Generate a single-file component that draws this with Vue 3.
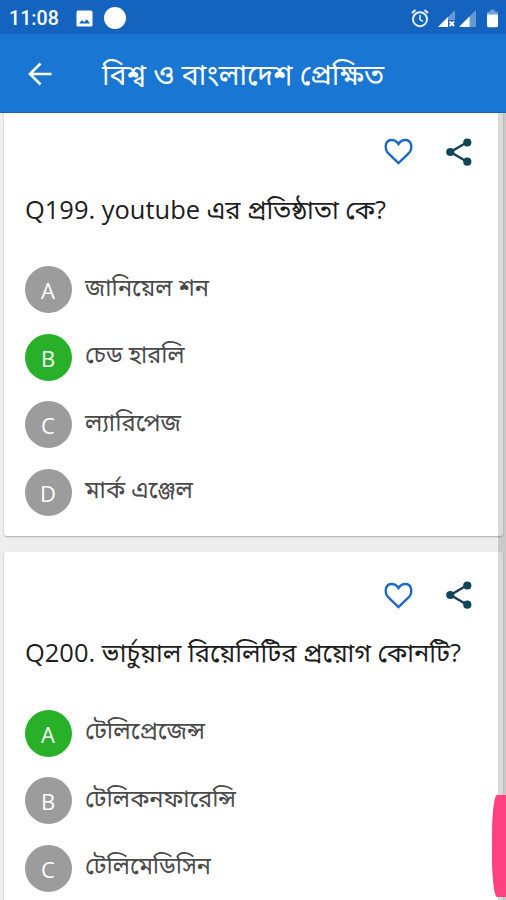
<script setup>
const questions = [
  {
    title: 'Q199. youtube এর প্রতিষ্ঠাতা কে?',
    width: 361,
    answer: 'B',
    options: [
      { key: 'A', text: 'জানিয়েল শন', width: 124 },
      { key: 'B', text: 'চেড হারলি', width: 99.5 },
      { key: 'C', text: 'ল্যারিপেজ', width: 96 },
      { key: 'D', text: 'মার্ক এঞ্জেল', width: 108 },
    ],
  },
  {
    title: 'Q200. ভার্চুয়াল রিয়েলিটির প্রয়োগ কোনটি?',
    width: 436,
    answer: 'A',
    options: [
      { key: 'A', text: 'টেলিপ্রেজেন্স', width: 120 },
      { key: 'B', text: 'টেলিকনফারেন্সি', width: 151 },
      { key: 'C', text: 'টেলিমেডিসিন', width: 126 },
    ],
  },
]
</script>

<template>
  <div class="screen">
    <div class="status">
      <span class="time">11:08</span>
      <svg class="photo" viewBox="0 0 17 17">
        <path fill="#fff" fill-rule="evenodd" d="M2 0.5H15Q16.5 0.5 16.5 2V15Q16.5 16.5 15 16.5H2Q0.5 16.5 0.5 15V2Q0.5 .5 2 .5ZM3 13.5H14L10.8 9.3 8.2 12.2 6 10Z" />
      </svg>
      <span class="dot"></span>
      <svg class="alarm" viewBox="0 0 18 19" fill="none" stroke="#e8f2ff">
        <circle cx="9" cy="10.2" r="7" stroke-width="2" />
        <path d="M9 6V10.5L12 12.5" stroke-width="1.5" />
        <path d="M1 4L4.5 1M17 4L13.5 1" stroke-width="2" />
      </svg>
      <svg class="signal first" viewBox="0 0 17 17">
        <path d="M0 17L17 0V10H10V17Z" fill="#fff" opacity=".35" />
        <path d="M0 17L10 7V17Z" fill="#fff" />
        <path d="M11.500 11.500L16 16M16 11.500L11.500 16" stroke="#fff" stroke-width="2" />
      </svg>
      <svg class="signal" viewBox="0 0 17 17">
        <path d="M0 17L17 0V17Z" fill="#fff" opacity=".35" />
        <path d="M0 17L10.500 6.500V17Z" fill="#fff" />
      </svg>
      <svg class="battery" viewBox="0 0 12 19">
        <path d="M3.500 0H8.500V2H10.500Q12 2 12 3.500V6H0V3.500Q0 2 1.500 2H3.500Z" fill="#6ea2dc" />
        <path d="M0 5H12V17.500Q12 19 10.500 19H1.500Q0 19 0 17.500Z" fill="#fff" />
      </svg>
    </div>
    <header class="bar">
      <svg class="back" viewBox="0 0 24 24" fill="none" stroke="#fff" stroke-width="2.600">
        <path d="M23.500 12H2M12.500 1.500L2 12L12.500 22.500" />
      </svg>
      <svg class="heading" width="284" height="44">
        <text x="0" y="32.500" textLength="282" lengthAdjust="spacingAndGlyphs">বিশ্ব ও বাংলাদেশ প্রেক্ষিত</text>
      </svg>
    </header>
    <main class="list">
      <section v-for="(q, i) in questions" :key="i" class="card">
        <div class="actions">
          <svg class="heart" viewBox="0 0 30 28" fill="none" stroke="#1b6bc7" stroke-width="2.500">
            <path d="M15 26L4.800 16.200C-.4 11 1.200 2 8 2C11.200 2 13.600 4 15 6.200C16.400 4 18.800 2 22 2C28.800 2 30.400 11 25.200 16.200Z" />
          </svg>
          <svg class="share" viewBox="0 0 26 28">
            <path d="M21 4.300L4.500 14L21 23.700" fill="none" stroke="#193f54" stroke-width="2.400" />
            <g fill="#0c4658">
              <circle cx="21.300" cy="4.500" r="4.100" />
              <circle cx="4.300" cy="14" r="4.100" />
              <circle cx="21.300" cy="23.700" r="4.100" />
            </g>
          </svg>
        </div>
        <svg class="question" width="460" height="44">
          <text x="0" y="28" :textLength="q.width" lengthAdjust="spacingAndGlyphs">{{ q.title }}</text>
        </svg>
        <ul class="options">
          <li v-for="o in q.options" :key="o.key">
            <span class="badge" :class="{ correct: o.key === q.answer }">{{ o.key }}</span>
            <svg class="label" :width="o.width + 4" height="40">
              <text x="0" y="26" :textLength="o.width" lengthAdjust="spacingAndGlyphs">{{ o.text }}</text>
            </svg>
          </li>
        </ul>
      </section>
    </main>
    <div class="track"></div>
    <div class="thumb"></div>
  </div>
</template>

<style>
body {
  margin: 0;
  overflow: hidden;
}
</style>

<style scoped>
.screen {
  position: relative;
  width: 506px;
  height: 900px;
  overflow: hidden;
  display: flex;
  flex-direction: column;
  background: #eee;
  font-family: "Open Sans", "Noto Sans", "Noto Sans Bengali", "Lohit Bengali", sans-serif;
}
svg {
  display: block;
  flex: none;
  overflow: visible;
}
.status {
  box-sizing: border-box;
  height: 34px;
  flex: none;
  display: flex;
  align-items: center;
  padding: 2px 8px 0 9px;
  background: #1464bf;
}
.time {
  width: 67px;
  color: #fff;
  font: 500 19.500px Roboto, sans-serif;
  letter-spacing: 0.1px;
}
.photo {
  width: 17px;
  height: 17px;
}
.dot {
  width: 22px;
  height: 22px;
  margin-left: 11px;
  border-radius: 50%;
  background: #fff;
}
.alarm {
  width: 18px;
  height: 19px;
  margin-left: auto;
}
.signal {
  width: 17px;
  height: 17px;
  margin-left: 4px;
}
.signal.first {
  margin-left: 9px;
}
.battery {
  width: 11px;
  height: 19px;
  margin-left: 11px;
}
.bar {
  box-sizing: border-box;
  height: 79px;
  flex: none;
  display: flex;
  align-items: center;
  padding-left: 28px;
  padding-top: 1px;
  background: #1976d2;
  border-bottom: 1px solid #1765b9;
}
.back {
  width: 24px;
  height: 24px;
}
.heading {
  margin-left: 50px;
  fill: #fff;
  font-size: 28.300px;
}
.list {
  flex: 1;
  min-height: 0;
  overflow: hidden;
  display: flex;
  flex-direction: column;
  gap: 16px;
  padding: 0 3px 0 4px;
}
.card {
  box-sizing: border-box;
  height: 427.500px;
  flex: none;
  padding: 28px 0 0 20.500px;
  border-radius: 3px;
  background: #fff;
  box-shadow: 0 1px 2px rgba(0, 0, 0, 0.28);
}
.card:first-child {
  margin-top: -4.500px;
}
.actions {
  display: flex;
  justify-content: flex-end;
  align-items: center;
  gap: 33px;
  height: 30px;
  padding-right: 31px;
}
.heart {
  width: 29px;
  height: 27px;
}
.share {
  width: 26px;
  height: 28px;
}
.question {
  margin-top: 24px;
  fill: #1d1d1d;
  font-size: 25.300px;
}
.options {
  list-style: none;
  margin: 0;
  padding: 31.500px 0 0;
  display: grid;
  gap: 20.500px;
}
.options li {
  display: flex;
  align-items: center;
  height: 47px;
}
.badge {
  width: 47px;
  height: 47px;
  border-radius: 50%;
  background: #9c9c9c;
  color: #fff;
  font-size: 22px;
  line-height: 48px;
  text-align: center;
}
.badge.correct {
  background: #28b029;
}
.label {
  margin-left: 13.500px;
  fill: #4a4a4a;
  font-size: 23.600px;
}
.track {
  position: absolute;
  top: 113px;
  right: 0;
  bottom: 0;
  width: 8.500px;
  background: rgba(0, 0, 0, 0.15);
}
.thumb {
  position: absolute;
  top: 795px;
  right: 0;
  width: 14px;
  height: 102px;
  border-radius: 5px 0 0 5px / 40px 0 0 40px;
  background: #ff4081;
}
</style>
